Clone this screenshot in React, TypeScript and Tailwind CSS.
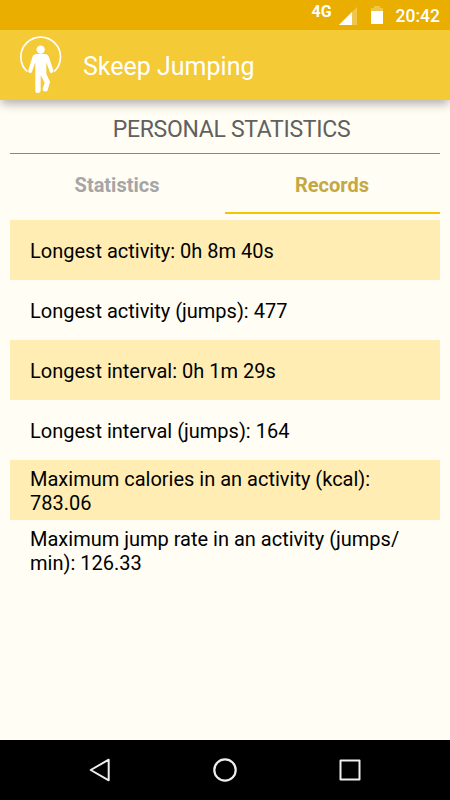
import type { ReactNode } from 'react';

type TabName = 'Statistics' | 'Records';

const TABS: TabName[] = ['Statistics', 'Records'];
const ACTIVE_TAB: TabName = 'Records';

const RECORDS = [
  'Longest activity: 0h 8m 40s',
  'Longest activity (jumps): 477',
  'Longest interval: 0h 1m 29s',
  'Longest interval (jumps): 164',
  'Maximum calories in an activity (kcal): 783.06',
  'Maximum jump rate in an activity (jumps/\u200bmin): 126.33',
];

function StatusBar() {
  return (
    <div className="z-20 flex h-[30px] shrink-0 items-center justify-end bg-[#e9ae00] pr-[10px] text-white">
      <span className="mr-[7px] -mt-[7px] text-[16px] leading-none font-bold">4G</span>
      <svg className="mt-[2px] mr-[14px] h-[18px] w-[18px]" viewBox="0 0 18 18" aria-hidden>
        <path d="M18 0V18H0Z" fill="#fff" fillOpacity=".3" />
        <path d="M13 5V18H0Z" fill="#fff" />
      </svg>
      <svg className="mr-[13px] h-[18px] w-[12px]" viewBox="0 0 12 18" aria-hidden>
        <path d="M0 5V2H3V0H9V2H12V5Z" fill="#fff" fillOpacity=".3" />
        <path d="M0 5H12V18H0Z" fill="#fff" />
      </svg>
      <span className="mt-[3px] text-[17.5px] leading-none font-medium">20:42</span>
    </div>
  );
}

function JumperLogo() {
  return (
    <svg className="h-[66px] w-[50px]" viewBox="0 0 150 198" fill="none" stroke="#fff" aria-hidden>
      <path d="M37 119A59.5 59.5 0 1 1 117 119" strokeWidth="5" />
      <circle cx="77" cy="53" r="12.5" fill="#fff" stroke="none" />
      <path
        d="M65 66H89Q99 66 102 76L115 115Q116 122 110 123Q106 124 104 119L94 91V126L104 147Q106 152 103 157L98 175Q95 180 88 178Q82 176 83 170L89 152L77 130V176Q76 183 69 183Q61 183 61 176V91L51 119Q49 124 44 123Q38 121 40 115L52 76Q55 66 65 66Z"
        fill="#fff"
        stroke="none"
      />
    </svg>
  );
}

function RecordRow({ striped, children }: { striped: boolean; children: ReactNode }) {
  return (
    <li className={`flex h-[60px] items-center px-5 pt-[2px] ${striped ? 'bg-[#ffedb3]' : ''}`}>
      <span>{children}</span>
    </li>
  );
}

function NavigationBar() {
  return (
    <nav className="flex h-[60px] shrink-0 items-center justify-center gap-[101px] bg-black">
      <svg className="h-6 w-6" viewBox="0 0 24 24" fill="none" stroke="#eee" strokeWidth="2" strokeLinejoin="round" aria-hidden>
        <path d="M20.7 1.7V22.3L2.7 12Z" />
      </svg>
      <svg className="h-6 w-6" viewBox="0 0 24 24" fill="none" stroke="#eee" strokeWidth="2.2" aria-hidden>
        <circle cx="12" cy="12" r="10.7" />
      </svg>
      <svg className="h-6 w-6" viewBox="0 0 24 24" fill="none" stroke="#eee" strokeWidth="2" strokeLinejoin="round" aria-hidden>
        <path d="M2.5 2.5H21.5V21.5H2.5Z" />
      </svg>
    </nav>
  );
}

export default function App() {
  return (
    <div className="flex h-[800px] w-[450px] flex-col overflow-hidden bg-[#fffdf4] font-['Roboto','Liberation_Sans',sans-serif] text-black">
      <StatusBar />
      <header className="z-10 flex h-[70px] shrink-0 items-center bg-[#f4ca36] pl-[15px] shadow-[0_5px_9px_-1px_rgba(90,80,90,0.45)]">
        <JumperLogo />
        <h1 className="mt-[3px] ml-[18px] text-[25px] leading-8 text-white">Skeep Jumping</h1>
      </header>

      <main className="flex-1 px-[10px]">
        <h2 className="h-[54px] border-b border-[#888] pt-[14px] pl-[13px] text-center text-[23px] leading-8 tracking-[-0.3px] text-[#606060]">
          PERSONAL STATISTICS
        </h2>
        <div className="grid h-[60px] grid-cols-2 text-[20px] font-bold">
          {TABS.map((tab) => (
            <button
              key={tab}
              type="button"
              className={`border-b-2 pt-[3px] pr-[1px] ${
                tab === ACTIVE_TAB ? 'border-[#f5c400] text-[#c4a844]' : 'border-transparent text-[#a5a5a5]'
              }`}
            >
              {tab}
            </button>
          ))}
        </div>
        <ul className="mt-[6px] text-[20px] leading-6">
          {RECORDS.map((record, index) => (
            <RecordRow key={record} striped={index % 2 === 0}>
              {record}
            </RecordRow>
          ))}
        </ul>
      </main>
      <NavigationBar />
    </div>
  );
}
